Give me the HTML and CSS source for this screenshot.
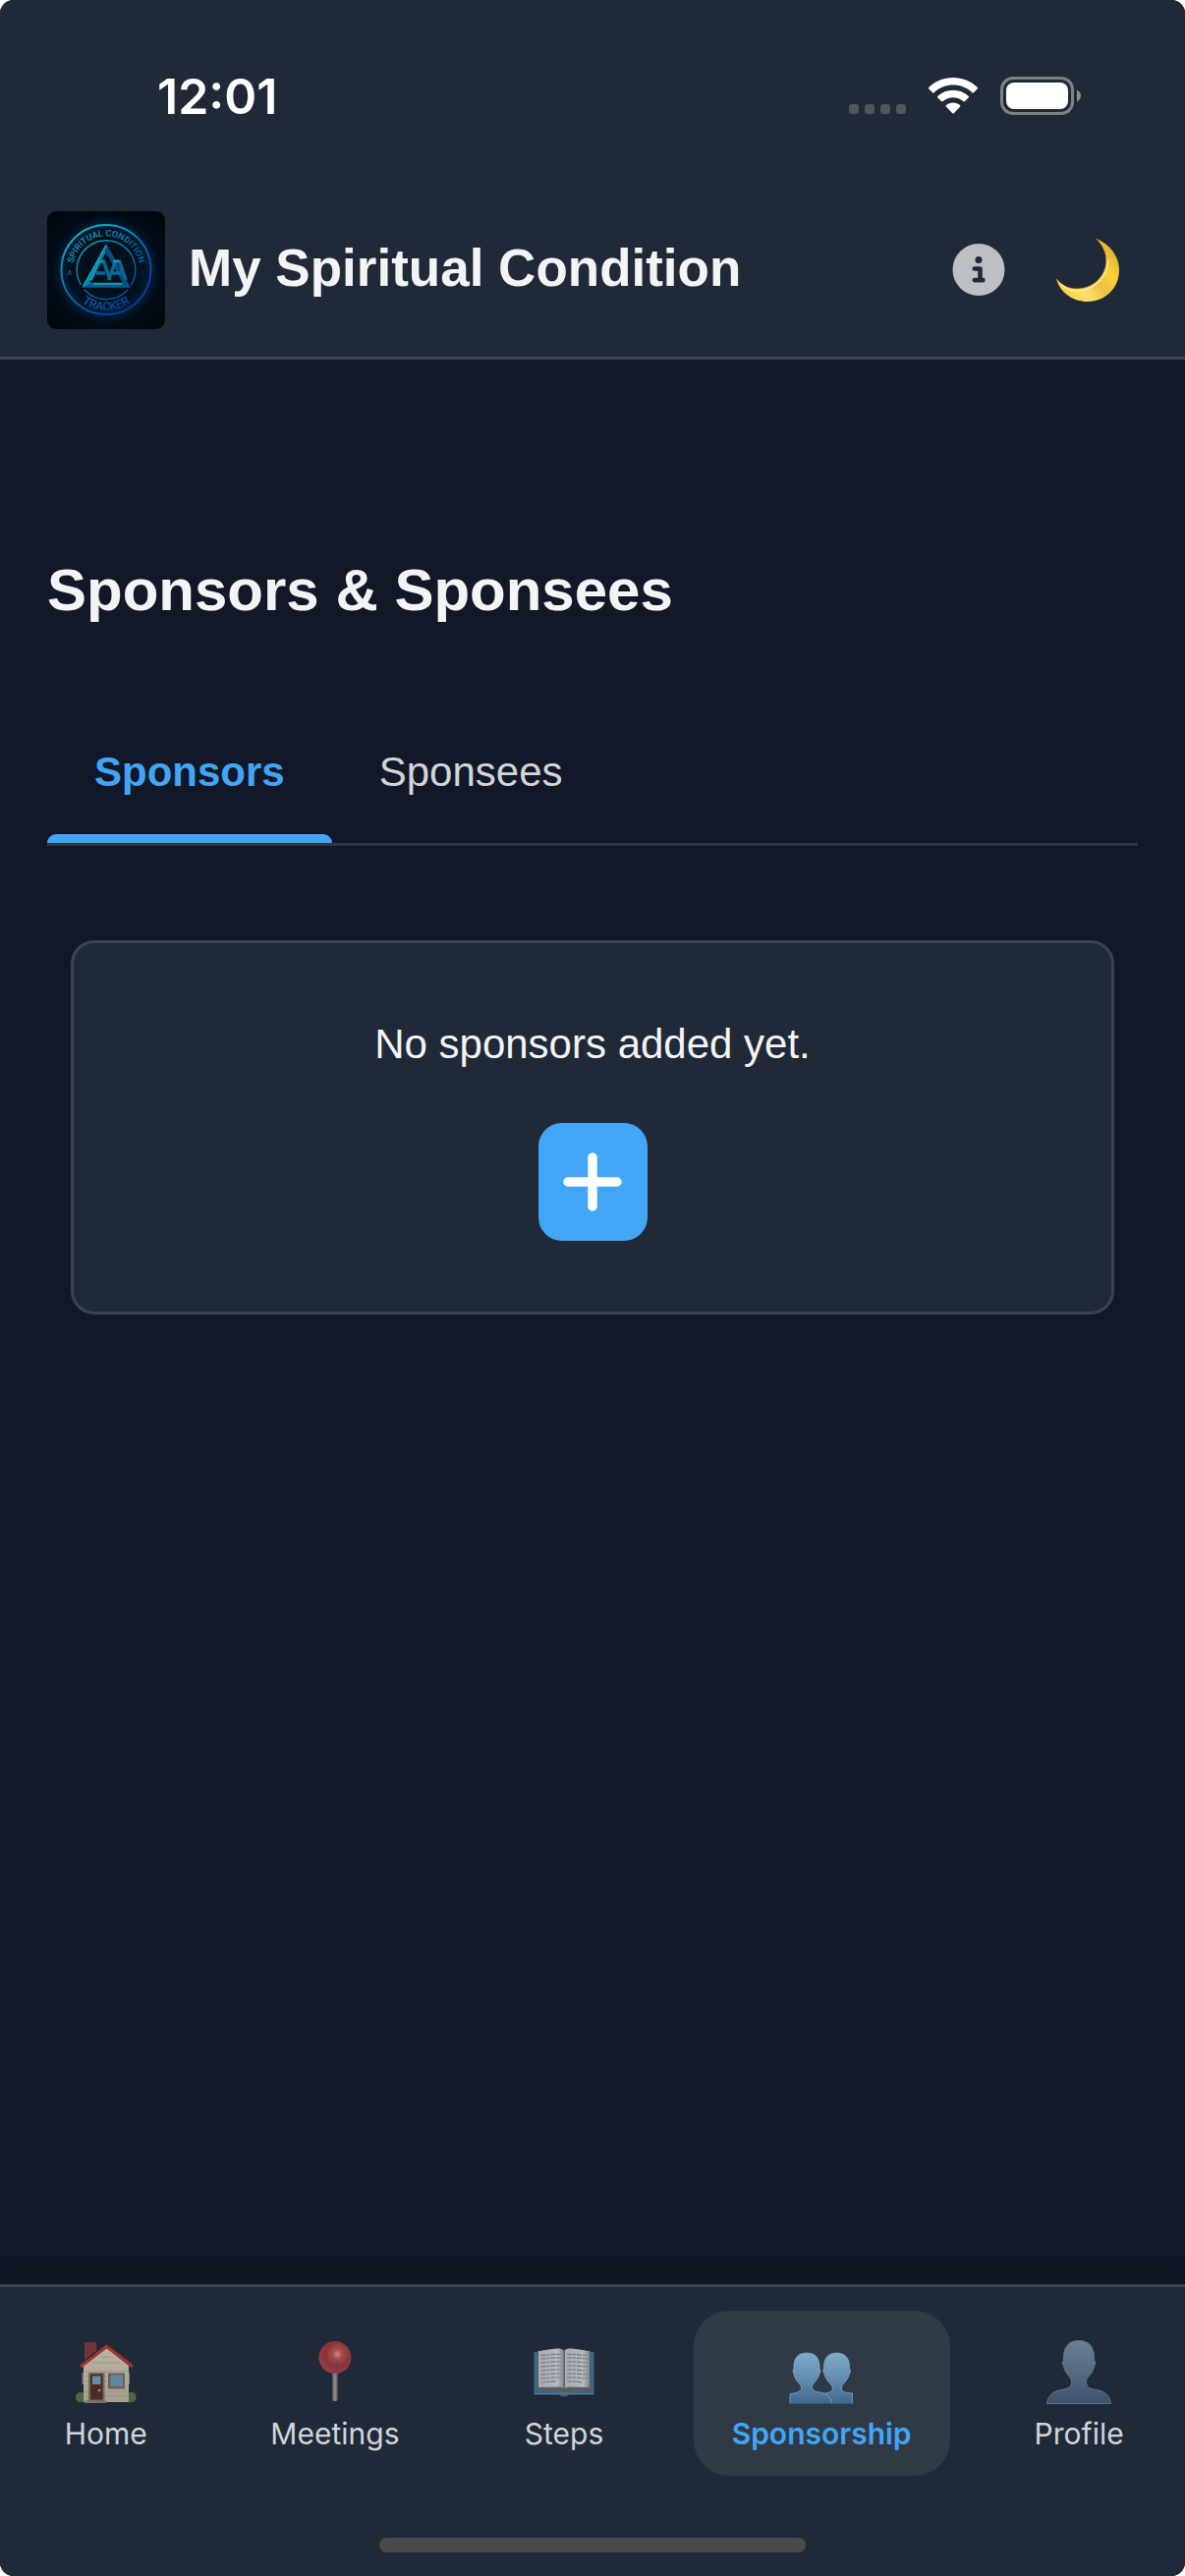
FILE: index.html
```html
<!DOCTYPE html>
<html lang="en">
<head>
<meta charset="utf-8">
<meta name="viewport" content="width=device-width, initial-scale=1">
<title>My Spiritual Condition</title>
<link rel="stylesheet" href="styles.css">
</head>
<body>
<div class="app">
  <div class="statusbar">
    <span class="clock">12:01</span>
    <div class="status-icons">
      <svg class="cell" width="58" height="40" viewBox="0 0 58 40" fill="#4e5661" aria-hidden="true">
        <rect x="0" y="28" width="10" height="10" rx="3"/><rect x="16" y="28" width="10" height="10" rx="3"/><rect x="32" y="28" width="10" height="10" rx="3"/><rect x="48" y="28" width="10" height="10" rx="3"/>
      </svg>
      <svg class="wifi" width="50" height="40" viewBox="0 0 50 40" fill="#fff" aria-hidden="true">
        <path d="M25 1C34.500 1 43 4.500 49.500 10.800C50.200 11.400 50.200 12 49.600 12.600L46 16.200C45.400 16.800 44.900 16.800 44.300 16.200C39 11.200 32.300 8.600 25 8.600S11 11.200 5.700 16.200C5.100 16.800 4.600 16.800 4 16.200L.4 12.600C-.2 12-.2 11.400.5 10.800C7 4.500 15.500 1 25 1Z"/>
        <path d="M25 13.700C31 13.700 36.400 15.900 40.600 19.800C41.200 20.400 41.200 20.900 40.600 21.500L37 25.100C36.400 25.700 35.900 25.700 35.300 25.100C32.400 22.600 28.900 21.200 25 21.200S17.600 22.600 14.700 25.100C14.100 25.700 13.600 25.700 13 25.100L9.400 21.500C8.800 20.900 8.800 20.400 9.400 19.800C13.600 15.900 19 13.700 25 13.700Z"/>
        <path d="M25 26.500C27.700 26.500 30 27.400 31.900 29C32.600 29.600 32.600 30.200 32 30.800L26 37C25.300 37.800 24.700 37.800 24 37L18 30.800C17.400 30.200 17.400 29.600 18.100 29C20 27.400 22.300 26.500 25 26.500Z"/>
      </svg>
      <svg class="battery" width="82" height="40" viewBox="0 0 82 40" aria-hidden="true">
        <rect x="1.500" y="1.500" width="72" height="36" rx="11.500" fill="none" stroke="#7c828b" stroke-width="3"/>
        <rect x="6" y="6" width="63" height="27" rx="8" fill="#fff"/>
        <path d="M78 13.500C83.300 16 83.300 23 78 25.500Z" fill="#8b9098"/>
      </svg>
    </div>
  </div>

  <header class="header">
    <svg class="logo" viewBox="0 0 120 120" role="img" aria-label="A Spiritual Condition Tracker">
      <defs>
        <radialGradient id="tile" cx=".5" cy=".5" r=".68"><stop offset="0" stop-color="#02131d"/><stop offset=".52" stop-color="#010f1b"/><stop offset="1" stop-color="#01050c"/></radialGradient>
        <linearGradient id="ring" gradientUnits="userSpaceOnUse" x1="28" y1="20" x2="85" y2="100"><stop offset="0" stop-color="#1fb9c6"/><stop offset=".45" stop-color="#0b77ad"/><stop offset="1" stop-color="#07389a"/></linearGradient>
        <filter id="glow" x="-30%" y="-30%" width="160%" height="160%"><feGaussianBlur stdDeviation="4"/></filter>
        <path id="arcTop" d="M26 60V59.500A34 34 0 0 1 94 59.500V60"/>
        <path id="arcLow" d="M19 60A41 41 0 0 0 101 60"/>
      </defs>
      <rect width="120" height="120" rx="9" fill="url(#tile)"/>
      <circle cx="60" cy="59.500" r="45.500" fill="none" stroke="#064a9b" stroke-width="4" opacity=".6" filter="url(#glow)"/>
      <g fill="none" stroke="url(#ring)">
        <circle cx="60" cy="59.500" r="45.500" stroke-width="1.800"/>
        <path d="M34.500 75A29.800 29.800 0 1 1 85.500 75M38 80A29.800 29.800 0 0 0 82 80" stroke-width="1.500"/>
      </g>
      <g class="logo-text" fill="url(#ring)" text-anchor="middle">
        <text><textPath href="#arcTop" startOffset="50%">SPIRITUAL CONDITION</textPath></text>
        <text class="logo-tracker"><textPath href="#arcLow" startOffset="50%">TRACKER</textPath></text>
        <text class="logo-mark" x="23" y="65">A</text>
        <text class="logo-mark" x="97" y="65">=</text>
      </g>
      <path d="M60 33L84.500 77.500H35.500L60 33ZM60 41L43.500 72.800H77L60 41Z" fill="#087fa9" fill-rule="evenodd"/>
      <path d="M60 33L84.500 77.500H80L57.500 38Z" fill="#0a4c7d"/>
      <path d="M35.500 77.500H84.500L81.500 73.500H46Z" fill="#07558c"/>
      <path d="M44.500 70L53.500 51H57.500L64 70M50 63H59M62.500 70L69.500 51H73.500L80 70M66 63H75" fill="none" stroke="#0b6694" stroke-width="3.600"/>
      <path d="M37 76L60 35M44 70L53 51H57M67 51H73M47 74H76" fill="none" stroke="#1aa9bd" stroke-width="1.500"/>
    </svg>
    <h1 class="title">My Spiritual Condition</h1>
    <button class="icon-button info" type="button" aria-label="About this app">
      <svg width="54" height="54" viewBox="0 0 54 54" aria-hidden="true">
        <circle cx="27" cy="26.500" r="26.500" fill="#bcbfc4"/>
        <circle cx="27" cy="16.500" r="3.500" fill="#202937"/>
        <path d="M22.800 25.500H28.500V37M22.800 37.100H31.400" fill="none" stroke="#202937" stroke-width="4.600" stroke-linecap="round" stroke-linejoin="round"/>
      </svg>
    </button>
    <button class="icon-button moon" type="button" aria-label="Switch theme">
      <svg width="66" height="66" viewBox="0 0 66 66" aria-hidden="true">
        <defs><linearGradient id="moonFill" gradientUnits="userSpaceOnUse" x1="8" y1="60" x2="62" y2="20"><stop offset="0" stop-color="#fcd033"/><stop offset=".3" stop-color="#fbe070"/><stop offset=".55" stop-color="#edc244"/><stop offset=".8" stop-color="#fbd13b"/><stop offset="1" stop-color="#e5b532"/></linearGradient></defs>
        <path d="M42 1C56 7 65 19 65 33C65 51 51 65 33 65C18 65 5 56 1 42C8 50 15 52.500 24 52C40 51 52 38 52 23C52 15 48 7 42 1Z" fill="url(#moonFill)"/>
        <path d="M1 42C8 50 15 52.500 24 52C40 51 52 38 52 23C52 15 48 7 42 1" fill="none" stroke="#d39a2f" stroke-width="1"/>
        <path d="M5 47C11 53 19 54.500 26 53.500C42 51 54 38 53.500 22" fill="none" stroke="#ffee91" stroke-width="2" opacity=".8"/>
      </svg>
    </button>
  </header>

  <main class="main">
    <h2 class="heading">Sponsors &amp; Sponsees</h2>
    <div class="tabs" role="tablist">
      <button class="tab tab-active" type="button" role="tab" aria-selected="true">Sponsors</button>
      <button class="tab" type="button" role="tab" aria-selected="false">Sponsees</button>
    </div>
    <section class="card">
      <p class="empty">No sponsors added yet.</p>
      <button class="add" type="button" aria-label="Add sponsor">
        <svg width="60" height="60" viewBox="0 0 60 60" aria-hidden="true"><path d="M30 5V55M5 30H55" stroke="#fff" stroke-width="9.500" stroke-linecap="round"/></svg>
      </button>
    </section>
  </main>

  <footer class="footer">
    <nav class="nav">
      <a class="nav-item" href="#home">
        <svg class="nav-icon" viewBox="0 0 72 72" aria-hidden="true">
          <defs><linearGradient id="wall" x2="0" y2="1"><stop offset="0" stop-color="#bcb3a3"/><stop offset="1" stop-color="#a79f91"/></linearGradient></defs>
          <circle cx="10" cy="61" r="5.200" fill="#496843"/><circle cx="61.500" cy="61" r="5.200" fill="#496843"/>
          <rect x="14" y="5" width="12" height="18" fill="#713639"/>
          <path d="M11.500 36H60V48H11.500Z" fill="#7d756b"/>
          <path d="M13 29L36.500 10L59 29V66H13Z" fill="url(#wall)"/>
          <path d="M15 35H57M15 40H57M15 45H57M15 50H57M15 55H57M15 60H57M22 26H50M29 20H43" stroke="#978e7f" stroke-width=".7"/>
          <path d="M10 28.500L36.500 8L63 28.500" fill="none" stroke="#382628" stroke-width="4"/>
          <path d="M10 30L36.500 9.500L63 30" fill="none" stroke="#96393b" stroke-width="3.200"/>
          <rect x="18" y="36" width="16.500" height="29" fill="#756b61"/><rect x="20" y="37.500" width="12.500" height="26" fill="#4b2d29"/>
          <rect x="22" y="39.500" width="8.500" height="8.500" fill="#678fa8"/><circle cx="29" cy="54" r="1.300" fill="#bd9851"/>
          <rect x="38" y="36.500" width="17" height="16" fill="#69615a"/><rect x="40.500" y="38.500" width="12.500" height="11.500" fill="#6286a0"/>
          <path d="M14 64.500H36V67H14Z" fill="#77736f"/>
        </svg>
        <span class="nav-label">Home</span>
      </a>
      <a class="nav-item" href="#meetings">
        <svg class="nav-icon" viewBox="0 0 72 72" aria-hidden="true">
          <defs>
            <radialGradient id="ball" cx=".57" cy=".4" r=".58"><stop offset="0" stop-color="#d58b8b"/><stop offset=".25" stop-color="#a64c50"/><stop offset=".65" stop-color="#873338"/><stop offset="1" stop-color="#963f46"/></radialGradient>
            <linearGradient id="needle"><stop offset="0" stop-color="#504d50"/><stop offset=".45" stop-color="#969092"/><stop offset="1" stop-color="#4b484b"/></linearGradient>
          </defs>
          <rect x="33" y="33" width="6" height="32" rx="2" fill="url(#needle)"/>
          <circle cx="36" cy="20.500" r="16.500" fill="url(#ball)"/>
          <path d="M33 26C34 24 38 24 40 26L38.500 36H33.500Z" fill="#7b3a49" opacity=".6"/>
        </svg>
        <span class="nav-label">Meetings</span>
      </a>
      <a class="nav-item" href="#steps">
        <svg class="nav-icon" viewBox="0 0 72 72" aria-hidden="true">
          <defs><linearGradient id="page"><stop offset="0" stop-color="#a7a9b1"/><stop offset=".75" stop-color="#b7b9c1"/><stop offset="1" stop-color="#81838a"/></linearGradient></defs>
          <path d="M5.500 15H66.500V58.500H41C40 61 32 61 31 58.500H5.500Z" fill="#3b6781"/>
          <path d="M6 57.500H66" stroke="#5085a1" stroke-width="1.200"/>
          <path d="M9 14H63V54C53 56 43 54 36 57C29 54 19 56 9 54Z" fill="#5d5c5e"/>
          <path d="M10 14C18 13 27 11 32 11.500Q35 12 36 14V52Q34 50.500 30 50.500L10 51Z" fill="url(#page)"/>
          <path d="M62 14C54 13 45 11 40 11.500Q37 12 36 14V52Q38 50.500 42 50.500L62 51Z" fill="url(#page)"/>
          <path d="M35.500 13H37V53H35.500Z" fill="#606168"/>
          <path d="M12.500 18.500C20 18 26 17 33 17.500M12.500 22C20 21.500 26 20.500 33 21M12.500 26C20 25.500 26 24.500 33 25M12.500 30C20 29.500 26 28.500 33 29M12.500 34C20 33.500 26 32.500 33 33M12.500 38C20 37.500 26 36.500 33 37M12.500 42C20 41.500 26 40.500 33 41M12.500 46L28 44.500M39 17.500C46 17 52 18 58 18.500M39 21C46 20.500 52 21.500 60 22M39 25C46 24.500 52 25.500 60 26M39 29C46 28.500 52 29.500 60 30M39 33C46 32.500 52 33.500 57 34M39 37C46 36.500 52 37.500 60 38M39 41C46 40.500 52 41.500 60 42M39 45C44 44.500 48 45 54 46" fill="none" stroke="#76787f" stroke-width="1.200" stroke-dasharray="5 1 3 1"/>
          <path d="M32 56H40Q36 59 32 56" fill="#776640"/>
        </svg>
        <span class="nav-label">Steps</span>
      </a>
      <a class="nav-item nav-active" href="#sponsorship" aria-current="page">
        <svg class="nav-icon" viewBox="0 0 72 72" aria-hidden="true">
          <defs><linearGradient id="duo" gradientUnits="userSpaceOnUse" x1="0" y1="16" x2="0" y2="68"><stop offset="0" stop-color="#7faac9"/><stop offset=".5" stop-color="#638db1"/><stop offset="1" stop-color="#41658f"/></linearGradient></defs>
          <g fill="url(#duo)" stroke="#7eaac4" stroke-width=".8">
            <path d="M35.500 67.500V57.500C44 57 47.500 55 47.500 52C47.500 48 41 46 39 37Q36.500 34 38.500 32C38 21 43 16 51.500 16S65 21 64.500 32Q66.500 34 64.500 37C63 45 56 47 56.500 52C56.500 56 61 56.500 67.500 57V67.500Z"/>
            <path d="M4 67.500V57.500C12 57 15.500 55 15.500 51C15.500 47 9 45 8 37Q6 34 8 32C7.500 21 12 16 21 16S34.500 21 34 32Q36 34 34 37C32 45 26 47 26.500 51C26.500 59 45 52 46.500 67.500Z"/>
          </g>
          <path d="M4 67.500H67.500" stroke="#34587d" stroke-width="1.200"/>
        </svg>
        <span class="nav-label">Sponsorship</span>
      </a>
      <a class="nav-item" href="#profile">
        <svg class="nav-icon" viewBox="0 0 72 72" aria-hidden="true">
          <defs><linearGradient id="solo" gradientUnits="userSpaceOnUse" x1="0" y1="3" x2="0" y2="68"><stop offset="0" stop-color="#6b8295"/><stop offset="1" stop-color="#3d526b"/></linearGradient></defs>
          <path d="M3.500 67.500C5 56 14 54 21 53C26 52 28.500 50 28.500 45C28.500 40 22 38 20.500 29.500Q18 26 20.500 23.500C20 10 25 3.500 36 3.500S52 10 51.500 23.500Q54 26 51.500 29.500C50 38 43.500 40 43.500 45C43.500 50 46 52 51 53C58 54 67 56 68.500 67.500Z" fill="url(#solo)" stroke="#627d8e" stroke-width=".9"/>
        </svg>
        <span class="nav-label">Profile</span>
      </a>
    </nav>
    <div class="home-indicator"></div>
  </footer>
</div>
</body>
</html>
```
FILE: styles.css
```css
:root {
  --surface: #202937;
  --page: #121827;
  --line: #3a4350;
  --accent: #42a5f5;
  --text: #f3f4f6;
  --muted: #d1d5db;
}

* { box-sizing: border-box; }

body {
  margin: 0;
  background: #fff;
  font-family: "Liberation Sans", Arial, sans-serif;
}

h1, h2, p { margin: 0; }

button {
  margin: 0;
  padding: 0;
  border: 0;
  background: none;
  font: inherit;
  cursor: pointer;
}

svg { display: block; }

.app {
  display: flex;
  flex-direction: column;
  min-height: 100vh;
  border-radius: 14px;
  overflow: hidden;
  background: var(--page);
  color: var(--text);
}

.statusbar {
  display: flex;
  justify-content: space-between;
  align-items: center;
  padding: 68px 106px 59px 160px;
  background: var(--surface);
}

.clock {
  font: 600 50px/60px Inter, sans-serif;
  color: #fff;
}

.status-icons { display: flex; gap: 23px; }

.header {
  display: flex;
  align-items: center;
  padding: 28px 66px 28px 48px;
  border-bottom: 3px solid var(--line);
  background: var(--surface);
}

.logo { width: 120px; height: 120px; flex: none; }

.logo-text { font: 500 9px Roboto, sans-serif; }
.logo-tracker { font-size: 12px; }
.logo-mark { font-size: 8px; opacity: .7; }

.title {
  flex: 1;
  margin-left: 24px;
  padding-bottom: 4px;
  font-size: 53px;
  line-height: 66px;
}

.moon { margin-left: 51px; }

.main { flex: 1; padding: 199px 48px 96px; }

.heading {
  font-size: 60px;
  line-height: 72px;
}

.tabs {
  display: flex;
  margin-top: 76px;
  border-bottom: 3px solid #2e3543;
}

.tab {
  position: relative;
  padding: 48px;
  font-size: 42px;
  line-height: 49px;
  color: var(--muted);
}

.tab-active { font-weight: 700; color: var(--accent); }

.tab-active::after {
  content: "";
  position: absolute;
  inset: auto 0 0;
  height: 9px;
  border-radius: 9px 9px 0 0;
  background: var(--accent);
}

.card {
  display: flex;
  flex-direction: column;
  align-items: center;
  gap: 49px;
  margin: 96px 24px 0;
  padding: 72px;
  border: 3px solid var(--line);
  border-radius: 24px;
  background: var(--surface);
}

.empty { font-size: 42px; line-height: 62px; }

.add {
  display: grid;
  place-items: center;
  width: 111px;
  height: 120px;
  border-radius: 24px;
  background: var(--accent);
}

.footer {
  border-top: 3px solid var(--line);
  padding: 24px 0;
  background: var(--surface);
  box-shadow: 0 -6px 24px rgba(0, 0, 0, .2);
}

.nav { display: flex; justify-content: space-around; }

.nav-item {
  display: flex;
  flex-direction: column;
  align-items: center;
  gap: 8px;
  min-width: 168px;
  padding: 27px 36px 25px;
  border-radius: 36px;
  font: 400 30px/36px Inter, sans-serif;
  color: var(--muted);
  text-decoration: none;
}

.nav-active {
  padding-inline: 39px;
  background: #303a47;
  font-weight: 600;
  color: var(--accent);
}

.nav-icon { width: 72px; height: 72px; }

.home-indicator {
  width: 36%;
  height: 15px;
  margin: 63px auto 0;
  border-radius: 8px;
  background: #4b4b4b;
}
```
